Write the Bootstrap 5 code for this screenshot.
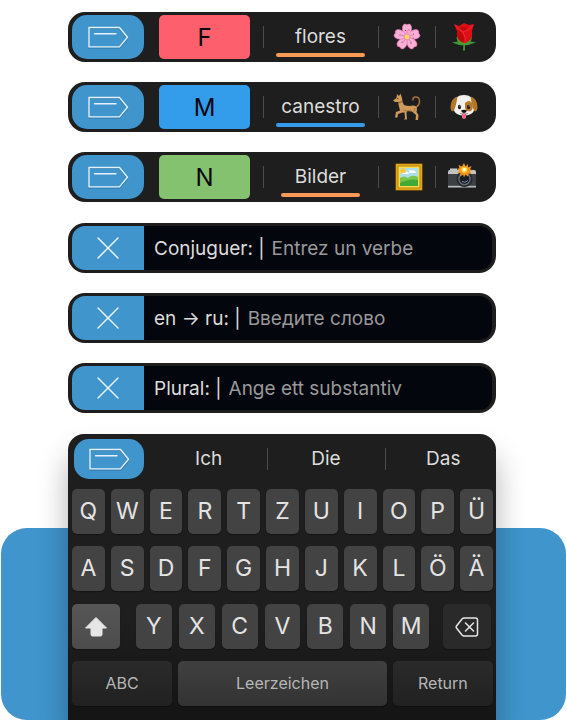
<!DOCTYPE html>
<html lang="en">
<head>
<meta charset="utf-8">
<meta name="viewport" content="width=device-width, initial-scale=1">
<title>Keyboard</title>
<link href="https://cdn.jsdelivr.net/npm/bootstrap@5.3.0/dist/css/bootstrap.min.css" rel="stylesheet">
<style>
:root{--ink:#1e1e1e;--brand:#3f95cc;--text:#dcdcdc}
body{font-family:Inter,"Noto Sans",sans-serif;font-weight:400;background:#fff}
button{border:0;padding:0;font-family:inherit;font-weight:inherit}
.stack{gap:21px;padding:12px 71px 0 68px}
.stack-group{gap:20px}
.pill{height:50px;padding:3px 4px;background:var(--ink);border-radius:17px;color:var(--text);font-size:19px}
.scribe{width:72px;background:var(--brand);border-radius:15px}
.gender{width:91px;margin-left:15px;margin-right:13px;padding-top:2px;border-radius:5px;color:#05070d;font-size:24px}
.red{background:#fd5f6d}.blue{background:#339dec}.green{background:#85c26f}
.cell{flex:57 1 0;background:none;color:inherit;position:relative}
.cell.word{flex-grow:115}
.divided::before{content:"";position:absolute;left:0;top:50%;width:1px;height:22px;margin-top:-11px;background:#4c4c4c}
.word span{position:relative;display:flex;justify-content:center;align-items:center;height:44px;margin:0 13px;padding-top:1px}
.word span::after{content:"";position:absolute;left:0;right:0;bottom:2px;height:4px;border-radius:2px;background:#fb9a56}
.word .line-blue::after{background:#339dec}
.word .line-short{margin:0 18px}
.field{border-radius:13px;background:#04060d;overflow:hidden}
.close-key{width:72px;background:var(--brand)}
.field label{margin-left:10px;padding-top:2px;white-space:pre}
.field input{min-width:0;background:none;border:0;outline:0;color:var(--text);padding:2px 0 0 7px;font-weight:inherit}
.field input::placeholder{color:#98999b;opacity:1}
.deck{display:grid;margin-top:21px}
.deck>*{grid-area:1/1}
.backdrop{margin:94px 1px 0;background:var(--brand);border-radius:26px}
.keyboard{margin:0 71px 0 68px;padding:5px 3px 14px 4px;border-radius:16px 16px 0 0;background:linear-gradient(var(--ink) 65%,#141414);box-shadow:0 22px 30px rgba(0,0,0,.3);color:var(--text)}
.suggest{height:40px;margin:0 -9px 10px 2px;font-size:19px}
.suggest .scribe{width:70px;margin-right:6px}
.rows{gap:12px}
.key-row{gap:6px}
.shift-row{padding-right:2px;margin-top:1px}
.key{height:45px;border-radius:5px;background:#434343;color:#e4e4e4;font-size:23px;line-height:45px;box-shadow:0 1px 1px rgba(0,0,0,.35)}
.letters{gap:7px;margin:0 14px 0 16px}
.side{width:48px}
.shift{background:linear-gradient(#565656,#4c4c4c)}
.dim{background:#2a2a2a}
.label-key{font-size:16px;color:#b6b6b6}
.wide{flex:100 1 0}
.wide.dim{background:linear-gradient(#2a2a2a,#212121)}
.space{flex:208 1 0;background:linear-gradient(#404040,#333)}
</style>
<script src="https://cdn.jsdelivr.net/npm/bootstrap@5.3.0/dist/js/bootstrap.bundle.min.js"></script>
</head>
<body>
<svg width="0" height="0" class="position-absolute" aria-hidden="true">
<defs>
<symbol id="tag" viewBox="0 0 42 24"><g fill="none" stroke-linejoin="round" stroke-linecap="round"><path d="M2 3.500h30.500l8 10-8 9.500H2z" stroke="#1b5d8c" stroke-opacity=".6" stroke-width="1.200"/><path d="M2 2.500h30.500l8 9.700-8 9.700H2zM7.500 8.800h21.500" stroke="#e6f2fa" stroke-width="1.400"/></g></symbol>
<symbol id="cross" viewBox="0 0 24 24"><path d="M2 2l20 20M22 2L2 22" stroke="#e9f4fb" stroke-width="1.500" stroke-linecap="round"/></symbol>
</defs>
</svg>
<main>
<div class="stack d-flex flex-column">
<div class="stack-group d-flex flex-column">
<div class="pill d-flex">
<button class="scribe d-flex align-items-center justify-content-center" aria-label="Commands"><svg width="42" height="24"><use href="#tag"/></svg></button>
<button class="gender red">F</button>
<button class="cell word divided"><span>flores</span></button>
<button class="cell divided" aria-label="Blossom"><svg width="28" height="28" viewBox="0 0 28 28"><defs><path id="petal" d="M14 14C10 11 8.500 6 10 2.500Q11.500 0 14 1.800Q16.500 0 18 2.500C19.500 6 18 11 14 14z"/></defs><g fill="#fbaed6" stroke="#e77bb5" stroke-width=".7"><use href="#petal"/><use href="#petal" transform="rotate(72 14 14)"/><use href="#petal" transform="rotate(144 14 14)"/><use href="#petal" transform="rotate(216 14 14)"/><use href="#petal" transform="rotate(288 14 14)"/></g><path d="M14 14V7M14 14l6-2M14 14l4.500 6M14 14l-4.500 6M14 14l-6-2" stroke="#d96aa3" stroke-width=".7"/><g fill="#76305a"><circle cx="12.500" cy="7.500" r=".6"/><circle cx="16" cy="7" r=".6"/><circle cx="20.500" cy="11" r=".6"/><circle cx="20" cy="15" r=".6"/><circle cx="18" cy="20" r=".6"/><circle cx="9" cy="19" r=".6"/><circle cx="7" cy="12" r=".6"/></g><circle cx="14" cy="14" r="3.200" fill="#e98ebc"/><circle cx="14" cy="14" r="2.400" fill="#ffd85a"/></svg></button>
<button class="cell divided" aria-label="Rose"><svg width="28" height="28" viewBox="0 0 28 28"><path d="M13.500 17h1.500v10.500h-2z" fill="#349a38"/><path d="M14 22Q10 17 2 19.500Q7 21 9 22Q12 22.500 14 22q3 1 7-1l5-1.500Q19 17 14 22" fill="#3d9938"/><path d="M6.500 14q.500 8 7.500 8t8-8z" fill="#499c36"/><path d="M4 1l5 2 5-3 5 2 5-1-2 7q1 7-3 10-4 4-9 0-4-3-3-10z" fill="#df1015"/><path d="M4 1q2 6 8 9l4 9q-6 1-8-4-1-4-1-8zM9 3q6 3 9-1l-3 7q-4-2-6-6z" fill="#c0080f"/><path d="M5 2q3 5 8 7 6-1 10-7M13 9q3 5 2 11" stroke="#ee3034" stroke-width=".9" fill="none"/></svg></button>
</div>
<div class="pill d-flex">
<button class="scribe d-flex align-items-center justify-content-center" aria-label="Commands"><svg width="42" height="24"><use href="#tag"/></svg></button>
<button class="gender blue">M</button>
<button class="cell word divided"><span class="line-blue">canestro</span></button>
<button class="cell divided" aria-label="Dog"><svg width="28" height="28" viewBox="0 0 28 28"><path d="M22.500 14.500q4.500-2.500 4-7-.5-4-4.500-3.500-2.500.5-2 3" fill="none" stroke="#a77137" stroke-width="1.500" stroke-linecap="round"/><path d="M0 7.500L3.500 5 4 1l2 2L7.500.500 9 5q0 4 2 7 5 1.500 9 .5 4 0 4 4l-.5 2.500 2 3-.5 5h-2.500l.5-5-4-3.500-5-.5-.5 2 .5 6.500h-3l1-1.500-.5-5.500H9.500L8 20l-3 1-.5 3.500H2L3 19l4-1.500-1-4Q5 11 5.500 9L2 9z" fill="#d09a5a"/><path d="M10 17q4 2 8 0M22 15q0 3-2 3.500" fill="none" stroke="#a87037" stroke-width=".8"/><circle cx="4.800" cy="5.500" r=".6" fill="#29190f"/><path d="M5.500 9.800l4.500-1.500" stroke="#87502a" stroke-width=".9"/></svg></button>
<button class="cell divided" aria-label="Dog face"><svg width="28" height="28" viewBox="0 0 28 28"><path d="M14 2c-6 0-9 3-10 8-1 3-1 6 .5 8.500 3 5.500 16 5.500 19 0 1.500-2.500 1.500-5.500.5-8.500-1-5-4-8-10-8z" fill="#f3f1ef"/><path d="M7.500 3.500Q1 5 .500 14q0 4 2.500 4.500 2.500-2 4.500-15M20.500 3.500q6.500 1.500 7 10.500 0 4-2.500 4.500-2.500-2-4.500-15" fill="#b47725"/><path d="M15 10q4-4 7 0 2 5-1 8-5 1-6-3z" fill="#ba7b28"/><ellipse cx="9.500" cy="14" rx="1.600" ry="2.200" fill="#20191a"/><ellipse cx="18.500" cy="14" rx="1.600" ry="2.200" fill="#20191a"/><circle cx="10" cy="13" r=".5" fill="#fff"/><circle cx="19" cy="13" r=".5" fill="#fff"/><path d="M12 21h4v3.500q-2 3-4 0z" fill="#f2688d"/><path d="M11 17.500q3-1.500 6 0-1 2.500-3 2.500t-3-2.500z" fill="#171315"/><path d="M10 20.500q3.500 1 4-.5.5 1.500 4 .5" fill="none" stroke="#7c6965" stroke-width=".8"/></svg></button>
</div>
<div class="pill d-flex">
<button class="scribe d-flex align-items-center justify-content-center" aria-label="Commands"><svg width="42" height="24"><use href="#tag"/></svg></button>
<button class="gender green">N</button>
<button class="cell word divided"><span class="line-short">Bilder</span></button>
<button class="cell divided" aria-label="Picture"><svg width="32" height="28" viewBox="-4 0 32 28"><path d="M.500.500h27v27H.500z" fill="#a76b08"/><path d="M1.200 1.200h25.600v25.600H1.200z" fill="#edb81c"/><path d="M3 3h22v22H3z" fill="#ffdc4b" stroke="#b47b0e"/><path d="M5 5h18v18H5z" fill="#ace0ed"/><circle cx="8" cy="8" r="2.700" fill="#ffc62e"/><path d="M7 11q1-2 3-1 2-3 4 1zM14 8q2-2 3 0 3-2 4 2h-7z" fill="#fff"/><path d="M5 15q4-3 8 0 4-4 10-1v9H5z" fill="#7ac64c"/><path d="M5 20q10-5 18-3v6H5z" fill="#43a936"/></svg></button>
<button class="cell divided" aria-label="Camera"><svg width="32" height="28" viewBox="0 0 32 28"><path d="M0 9q0-2 2-2V5.500h7V7h17q2 0 2 2v15.500H0z" fill="#3c4045"/><path d="M0 9q0-2 2-2V5.500h7V7h17q2 0 2 2v2H0z" fill="#c0c4c6"/><path d="M0 22.800h28v1.700H0z" fill="#b5b9bb"/><circle cx="16.500" cy="16" r="8" fill="#24282e"/><circle cx="16.500" cy="16" r="6.300" fill="#666b72"/><circle cx="16.500" cy="16" r="4.900" fill="#191d26"/><path d="M14 18.500q3 2 6-1" stroke="#78889b" fill="none"/><path d="M16 0l1.500 3.500L20 1v3.500l3.500-1.500-1.500 3.500 3 .5-3 1.500 1.500 2.500-3-.5-.5 3-2.500-2-1.500 3-1-3-3 2 .5-3.500-3.500 0 2.500-2.500-3-1.500 3-.8L10.500 2l3.500 1.500z" fill="#f6961c"/><circle cx="16.300" cy="6.800" r="3" fill="#ffd13a"/><circle cx="16.300" cy="6.800" r="1.700" fill="#fffbd1"/></svg></button>
</div>
</div>
<div class="stack-group d-flex flex-column">
<div class="pill"><div class="field d-flex align-items-center h-100"><button class="close-key flex-shrink-0 h-100 d-flex align-items-center justify-content-center" aria-label="Close"><svg width="24" height="24"><use href="#cross"/></svg></button><label for="verb">Conjuguer: |</label><input id="verb" class="flex-grow-1" placeholder="Entrez un verbe"></div></div>
<div class="pill"><div class="field d-flex align-items-center h-100"><button class="close-key flex-shrink-0 h-100 d-flex align-items-center justify-content-center" aria-label="Close"><svg width="24" height="24"><use href="#cross"/></svg></button><label for="translate">en → ru: |</label><input id="translate" class="flex-grow-1" placeholder="Введите слово"></div></div>
<div class="pill"><div class="field d-flex align-items-center h-100"><button class="close-key flex-shrink-0 h-100 d-flex align-items-center justify-content-center" aria-label="Close"><svg width="24" height="24"><use href="#cross"/></svg></button><label for="plural">Plural: |</label><input id="plural" class="flex-grow-1" placeholder="Ange ett substantiv"></div></div>
</div>
</div>
<div class="deck">
<div class="backdrop"></div>
<div class="keyboard">
<div class="suggest d-flex">
<button class="scribe d-flex align-items-center justify-content-center" aria-label="Commands"><svg width="42" height="24"><use href="#tag"/></svg></button>
<button class="cell">Ich</button><button class="cell divided">Die</button><button class="cell divided">Das</button>
</div>
<div class="rows d-flex flex-column">
<div class="key-row d-flex"><button class="key w-100">Q</button><button class="key w-100">W</button><button class="key w-100">E</button><button class="key w-100">R</button><button class="key w-100">T</button><button class="key w-100">Z</button><button class="key w-100">U</button><button class="key w-100">I</button><button class="key w-100">O</button><button class="key w-100">P</button><button class="key w-100">Ü</button></div>
<div class="key-row d-flex"><button class="key w-100">A</button><button class="key w-100">S</button><button class="key w-100">D</button><button class="key w-100">F</button><button class="key w-100">G</button><button class="key w-100">H</button><button class="key w-100">J</button><button class="key w-100">K</button><button class="key w-100">L</button><button class="key w-100">Ö</button><button class="key w-100">Ä</button></div>
<div class="shift-row d-flex">
<button class="key side shift flex-shrink-0 d-flex align-items-center justify-content-center" aria-label="Shift"><svg width="24" height="22" viewBox="0 0 24 22"><path d="M12 1.500L22.500 12H18v6.500q0 1.500-1.500 1.500h-8Q7 20 7 18.500V12H1.500z" fill="#e6e6e6" stroke="#e6e6e6" stroke-linejoin="round"/></svg></button>
<div class="letters d-flex flex-grow-1"><button class="key w-100">Y</button><button class="key w-100">X</button><button class="key w-100">C</button><button class="key w-100">V</button><button class="key w-100">B</button><button class="key w-100">N</button><button class="key w-100">M</button></div>
<button class="key side dim flex-shrink-0 d-flex align-items-center justify-content-center" aria-label="Delete"><svg width="24" height="22" viewBox="0 0 24 22"><path d="M9 2h11.500q2 0 2 2v14q0 2-2 2H9q-1 0-2-1l-5.500-7q-.7-1 0-2L7 3q1-1 2-1zM10.500 7l8 8M18.500 7l-8 8" fill="none" stroke="#e6e6e6" stroke-width="1.500" stroke-linecap="round" stroke-linejoin="round"/></svg></button>
</div>
<div class="key-row d-flex"><button class="key label-key wide dim">ABC</button><button class="key label-key space">Leerzeichen</button><button class="key label-key wide dim">Return</button></div>
</div>
</div>
</div>
</main>
</body>
</html>
